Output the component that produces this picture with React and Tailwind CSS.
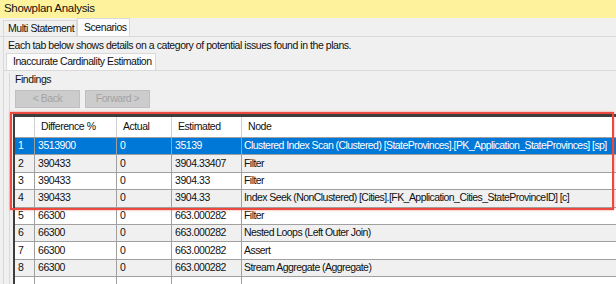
import React from "react"

const rows = [
    ["1", "3513900", "0", "35139", "Clustered Index Scan (Clustered) [StateProvinces].[PK_Application_StateProvinces] [sp]"],
    ["2", "390433", "0", "3904.33407", "Filter"],
    ["3", "390433", "0", "3904.33", "Filter"],
    ["4", "390433", "0", "3904.33", "Index Seek (NonClustered) [Cities].[FK_Application_Cities_StateProvinceID] [c]"],
    ["5", "66300", "0", "663.000282", "Filter"],
    ["6", "66300", "0", "663.000282", "Nested Loops (Left Outer Join)"],
    ["7", "66300", "0", "663.000282", "Assert"],
    ["8", "66300", "0", "663.000282", "Stream Aggregate (Aggregate)"],
    ["", "", "", "", ""],
]

const Row = ({ row, index }) => {
    const selected = index === 0
    const bg = selected ? "bg-[#0078d7] text-white" : index % 2 === 1 ? "bg-[#f0f0f0]" : "bg-white"
    return (
        <div className={`flex h-[17.4px] shrink-0 border-b border-[#a0a0a0] ${bg}`}>
            <div className="w-[20px] shrink-0 border-r border-[#a0a0a0] pl-[3px] flex items-center">{row[0]}</div>
            <div className="w-[82px] shrink-0 border-r border-[#a0a0a0] pl-[3px] flex items-center">{row[1]}</div>
            <div className="w-[55px] shrink-0 border-r border-[#a0a0a0] pl-[3px] flex items-center">{row[2]}</div>
            <div className="w-[70px] shrink-0 border-r border-[#a0a0a0] pl-[3px] flex items-center">{row[3]}</div>
            <div className="flex-1 pl-[2px] flex items-center whitespace-nowrap tracking-[-0.56px]">{row[4]}</div>
        </div>
    )
}

const App = () => {
    return (
        <div className="relative w-[616px] h-[284px] overflow-hidden bg-[#f0f0f0] text-[10.5px] tracking-[-0.45px] text-[#111] whitespace-nowrap"
            style={{ fontFamily: '"Liberation Sans", Arial, sans-serif' }}>
            {/* title bar */}
            <div className="h-[18px] bg-[#fff29d] pl-[4px] flex items-center text-[11.5px] tracking-[-0.3px]">Showplan Analysis</div>

            {/* outer tabs */}
            <div className="h-[19px] flex items-end pl-[3px] border-b border-[#d9d9d9]">
                <div className="h-[16px] w-[74px] pl-[4px] border border-b-0 border-[#d9d9d9] bg-[#f0f0f0] flex items-center">Multi Statement</div>
                <div className="h-[18px] w-[53px] pl-[6px] border border-b-0 border-[#d9d9d9] bg-[#fcfcfc] flex items-center">Scenarios</div>
            </div>

            {/* outer tab page */}
            <div className="ml-[3px] border-l border-[#d9d9d9] h-full">
                <div className="h-[18px] pl-[4px] flex items-center">Each tab below shows details on a category of potential issues found in the plans.</div>

                {/* inner tabs */}
                <div className="h-[16px] flex items-end pl-[2px] border-b border-[#d9d9d9]">
                    <div className="h-[17px] w-[150px] pl-[6px] border border-b-0 border-[#d9d9d9] bg-[#fcfcfc] flex items-center">Inaccurate Cardinality Estimation</div>
                </div>

                {/* inner tab page */}
                <div className="ml-[5px] border-l border-[#d9d9d9] h-full pl-[4px]">
                    <div className="h-[14px] pl-[1px] flex items-center mt-[2px]">Findings</div>
                    <div className="flex gap-[5px] mt-[3px] pl-[1px]">
                        <button className="w-[65px] h-[18px] bg-[#cccccc] border border-[#bfbfbf] text-[#a3a3a3] flex items-center justify-center">&lt; Back</button>
                        <button className="w-[65px] h-[18px] bg-[#cccccc] border border-[#bfbfbf] text-[#a3a3a3] flex items-center justify-center">Forward &gt;</button>
                    </div>

                    {/* grid */}
                    <div className="mt-[6px] -ml-[1px] border-l-2 border-t-[3px] border-[#3d3d3d] flex flex-col">
                        <div className="flex h-[21px] shrink-0 bg-white border-b border-[#a0a0a0]">
                            <div className="w-[20px] shrink-0 border-r border-[#d0d0d0]"></div>
                            <div className="w-[82px] shrink-0 border-r border-[#d0d0d0] pl-[6px] flex items-center">Difference %</div>
                            <div className="w-[55px] shrink-0 border-r border-[#d0d0d0] pl-[6px] flex items-center">Actual</div>
                            <div className="w-[70px] shrink-0 border-r border-[#d0d0d0] pl-[6px] flex items-center">Estimated</div>
                            <div className="flex-1 pl-[6px] flex items-center">Node</div>
                        </div>
                        {rows.map((row, i) => <Row key={i} row={row} index={i} />)}
                    </div>
                </div>
            </div>

            {/* highlight annotation */}
            <div className="absolute left-[10px] top-[112px] w-[604px] h-[98px] border-2 border-[#ec4a3e] shadow-[0_0_2px_rgba(236,74,62,0.6)] pointer-events-none"></div>
        </div>
    )
}

export default App
